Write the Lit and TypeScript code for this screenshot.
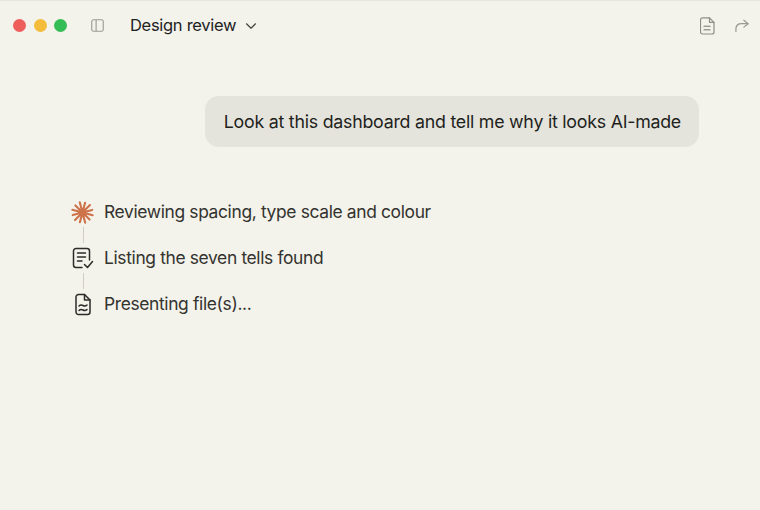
import { LitElement, html, css } from "lit";
import { customElement } from "lit/decorators.js";

const RAYS = Array.from({ length: 12 }, (_, i) => {
  const a = ((i * 30 + 15) * Math.PI) / 180;
  const r = i % 2 === 0 ? 11 : 10.5;
  return `M12 12L${(12 + r * Math.cos(a)).toFixed(2)} ${(12 + r * Math.sin(a)).toFixed(2)}`;
}).join("");

@customElement("app-root")
export class AppRoot extends LitElement {
  static styles = css`
    :host {
      display: block;
      width: 760px;
      height: 510px;
      background: #f3f2eb;
      color: #22221f;
      font-family: Inter, "Liberation Sans", sans-serif;
      overflow: hidden;
    }
    .bar {
      display: flex;
      align-items: center;
      height: 50px;
      padding: 0 11px 0 13px;
      box-sizing: border-box;
      border-top: 1px solid #e6e5de;
    }
    .lights { display: flex; gap: 7.5px; }
    .light { width: 13px; height: 13px; border-radius: 50%; }
    .red { background: #ee5f5c; }
    .yellow { background: #f4bc3b; }
    .green { background: #35bd55; }
    .side { margin-left: 24px; margin-right: 1px; display: block; }
    .title {
      margin-left: 25px;
      font-size: 16.5px;
      letter-spacing: -0.3px;
      line-height: 24px;
      margin-top: -1px;
    }
    .chev { margin-left: 9px; display: block; }
    .spacer { flex: 1; }
    .right { display: flex; align-items: center; gap: 20px; }
    .right svg { display: block; }
    .main {
      display: flex;
      flex-direction: column;
      padding: 46px 61px 0 71px;
    }
    .bubble {
      align-self: flex-end;
      background: #e4e4dd;
      border-radius: 14px;
      padding: 0 18px 0 19px;
      height: 51px;
      display: flex;
      align-items: center;
      font-size: 17.8px;
      letter-spacing: -0.24px;
      color: #1f1f1c;
    }
    .steps { display: flex; flex-direction: column; margin-top: 50px; }
    .step {
      display: flex;
      align-items: center;
      gap: 10px;
      height: 30px;
      font-size: 17.4px;
      letter-spacing: -0.35px;
      color: #33332f;
    }
    .step span { margin-top: -1px; }
    .step svg { display: block; flex: none; }
    .line {
      width: 1px;
      height: 16px;
      margin-left: 11.5px;
      background: #cfcdc3;
    }
  `;

  render() {
    return html`
      <div class="bar">
        <div class="lights">
          <div class="light red"></div>
          <div class="light yellow"></div>
          <div class="light green"></div>
        </div>
        <svg class="side" width="13" height="13" viewBox="0 0 14 14" fill="none" stroke="#9b9a92" stroke-width="1.2">
          <rect x="0.8" y="0.8" width="12.4" height="12.4" rx="2"></rect>
          <path d="M5.5 0.8V13.2"></path>
        </svg>
        <div class="title">Design review</div>
        <svg class="chev" width="12" height="8" viewBox="0 0 12 8" fill="none" stroke="#44443f" stroke-width="1.2" stroke-linecap="round" stroke-linejoin="round">
          <path d="M1.500 1.800 6 6.200 10.500 1.800"></path>
        </svg>
        <div class="spacer"></div>
        <div class="right">
          <svg width="15" height="18" viewBox="0 0 15 18" fill="none" stroke="#8f8e86" stroke-width="1.2" stroke-linejoin="round" stroke-linecap="round">
            <path d="M2.500 .8H9.500L14 5.300V15a2 2 0 0 1-2 2H2.500a2 2 0 0 1-2-2V2.800a2 2 0 0 1 2-2Z"></path>
            <path d="M9.500 .8V5.300H14"></path>
            <path d="M4 9.500 5 9l1 .5 1-.5 1 .5 1-.5 1 .5"></path>
            <path d="M4 13 5 12.500l1 .5 1-.5 1 .5 1-.5 1 .5"></path>
          </svg>
          <svg width="14" height="14" viewBox="0 0 15 14" fill="none" stroke="#9b9a92" stroke-width="1.3" stroke-linecap="round" stroke-linejoin="round">
            <path d="M1 13V10C1 6.500 3.500 4.500 7 4.500H14"></path>
            <path d="M9.500 .8 14 4.500 9.500 8.200"></path>
          </svg>
        </div>
      </div>
      <div class="main">
        <div class="bubble">Look at this dashboard and tell me why it looks AI-made</div>
        <div class="steps">
          <div class="step">
            <svg width="23" height="23" viewBox="0 0 24 24" fill="none" stroke="#cd7249" stroke-width="2.200" stroke-linecap="round">
              <path d="${RAYS}"></path>
            </svg>
            <span>Reviewing spacing, type scale and colour</span>
          </div>
          <div class="line"></div>
          <div class="step">
            <svg width="23" height="23" viewBox="0 0 23 23" fill="none" stroke="#2b2b28" stroke-width="1.500" stroke-linecap="round" stroke-linejoin="round">
              <path d="M11 20.500H5a2.500 2.500 0 0 1-2.500-2.500V4A2.500 2.500 0 0 1 5 1.500H16A2.500 2.500 0 0 1 18.500 4V13"></path>
              <path d="M6.500 6H14.500M6.500 10H14.500M6.500 14H11"></path>
              <path d="M13.500 17.500 16.500 20.500 21.500 14.500"></path>
            </svg>
            <span>Listing the seven tells found</span>
          </div>
          <div class="line"></div>
          <div class="step">
            <svg width="23" height="23" viewBox="0 0 23 23" fill="none" stroke="#2b2b28" stroke-width="1.500" stroke-linecap="round" stroke-linejoin="round">
              <path d="M7.500 1.500H13.500L19 7V19a2.500 2.500 0 0 1-2.500 2.500H7.500A2.500 2.500 0 0 1 5 19V4A2.500 2.500 0 0 1 7.500 1.500Z"></path>
              <path d="M13.500 1.500V7H19"></path>
              <path d="M8 13C9.500 11.500 10 11.500 12 12.500S14.500 13.500 16 12"></path>
              <path d="M8 17.500C9.500 16 10 16 12 17S14.500 18 16 16.500"></path>
            </svg>
            <span>Presenting file(s)...</span>
          </div>
        </div>
      </div>
    `;
  }
}
